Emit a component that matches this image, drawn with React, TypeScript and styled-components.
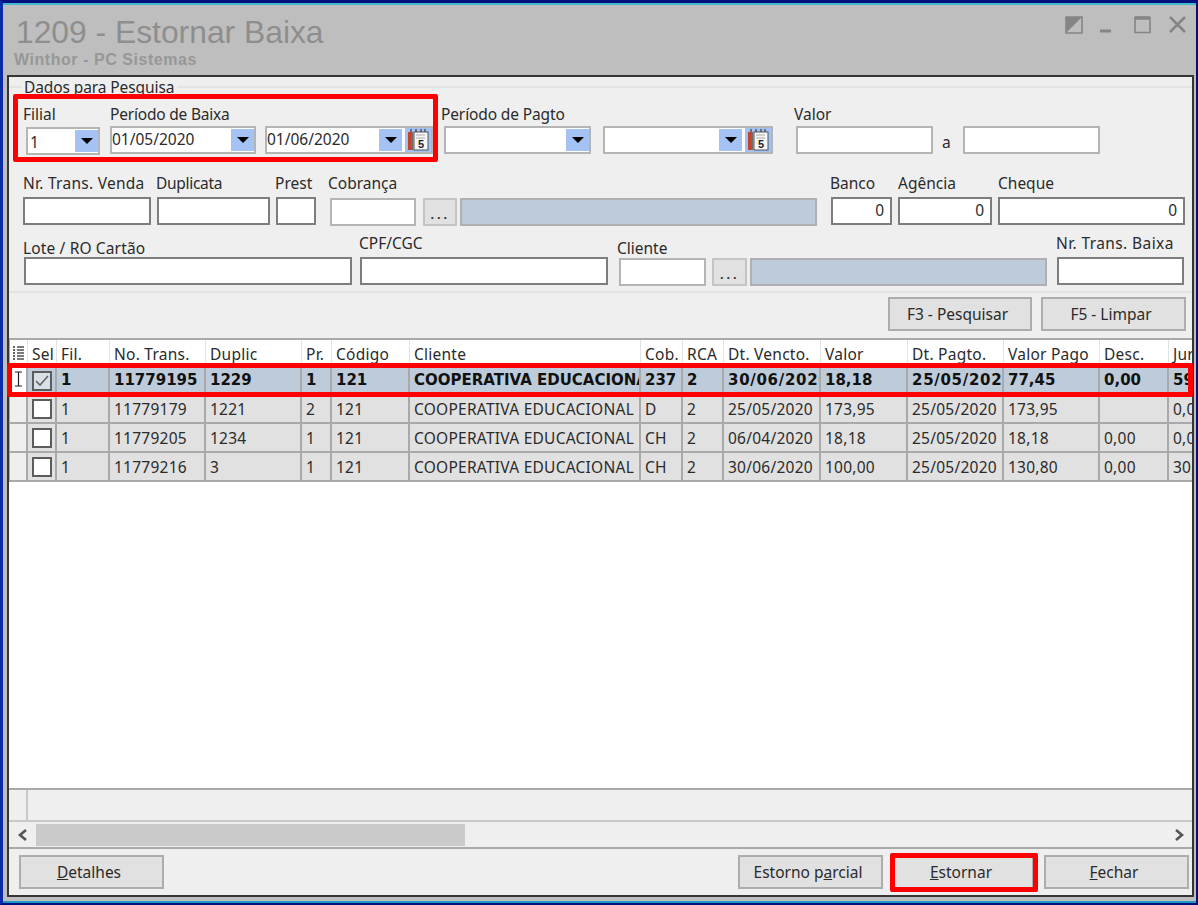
import React from "react";
import styled, { createGlobalStyle } from "styled-components";

const Global = createGlobalStyle`
  html, body { margin: 0; padding: 0; background: #bebebe; overflow: hidden; }
  * { box-sizing: border-box; }
`;

const UI_FONT = `"Noto Sans", "DejaVu Sans", sans-serif`;
const BOLD_FONT = `"DejaVu Sans", "Noto Sans", sans-serif`;

const Page = styled.div`
  position: relative;
  width: 1198px;
  height: 905px;
  font-family: ${UI_FONT};
  font-size: 15.5px;
  color: #2b2b2b;
  overflow: hidden;
`;
const Frame = styled.div`
  width: 100%;
  height: 100%;
  border-style: solid;
  border-color: #00107c #00107c #00107c #0a2ca6;
  border-width: 3px 2px 2px 3px;
`;
const Inner = styled.div`
  height: 100%;
  background: #bebebe;
  border-top: 2px solid #45b7cc;
  border-bottom: 2px solid #2296c8;
  display: flex;
  flex-direction: column;
`;
const TitleBar = styled.header`
  height: 70px;
  flex: none;
  display: flex;
  justify-content: space-between;
`;
const TitleText = styled.div`
  padding: 7px 0 0 13px;
`;
const Title = styled.h1`
  margin: 0;
  font: 400 31.8px/40px "Liberation Sans", Arial, sans-serif;
  color: #8e8e8e;
`;
const Subtitle = styled.div`
  font: 700 16px/16px "Liberation Sans", Arial, sans-serif;
  color: #979797;
  margin: 0 0 0 -2px;
  letter-spacing: 0.55px;
`;
const WindowIcons = styled.svg`
  width: 125px;
  height: 30px;
  margin: 11px 6px 0 0;
  flex: none;
`;
const Panel = styled.main`
  flex: 1;
  min-height: 0;
  margin: 0 2px 4px 4px;
  border: 2px solid #363636;
  background: #efefef;
  display: flex;
  flex-direction: column;
`;
const Group = styled.section`
  margin-top: 9px;
  border-top: 2px solid #e3e3e3;
  border-bottom: 2px solid #e3e3e3;
  padding-bottom: 6px;
  flex: none;
`;
const Legend = styled.div`
  width: fit-content;
  margin: -10px 0 0 12px;
  padding: 0 3px;
  height: 18px;
  line-height: 18px;
  background: #efefef;
  letter-spacing: -0.1px;
`;
const FormRow = styled.div<{ $mt: number }>`
  display: flex;
  align-items: flex-end;
  margin-top: ${(p) => p.$mt}px;
`;
const Field = styled.div<{ $w: number; $ml: number; $shift?: number }>`
  width: ${(p) => p.$w}px;
  margin-left: ${(p) => p.$ml}px;
  margin-bottom: ${(p) => -(p.$shift ?? 0)}px;
  flex: none;
`;
const Label = styled.label<{ $dx?: number; $gap?: number; $ls?: number }>`
  display: block;
  height: 18px;
  line-height: 18px;
  white-space: nowrap;
  margin-left: ${(p) => p.$dx ?? 0}px;
  margin-bottom: ${(p) => p.$gap ?? 3}px;
  letter-spacing: ${(p) => p.$ls ?? 0}px;
`;
const Box = styled.div<{ $dark?: boolean; $right?: boolean }>`
  height: 28px;
  background: #fff;
  border: 2px solid ${(p) => (p.$dark ? "#7d7d7d" : "#b5b5b5")};
  display: flex;
  align-items: center;
  justify-content: ${(p) => (p.$right ? "flex-end" : "flex-start")};
  padding: ${(p) => (p.$right ? "0 6px 0 0" : "0")};
  line-height: 1;
`;
const ComboValue = styled.span<{ $inset?: boolean }>`
  flex: 1;
  padding: ${(p) => (p.$inset ? "3px 0 0 2px" : "0")};
`;
const ArrowBtn = styled.span`
  width: 23px;
  height: 22px;
  background: #a4c2f4;
  flex: none;
  display: flex;
  align-items: center;
  justify-content: center;
  &::after {
    content: "";
    border-left: 6px solid transparent;
    border-right: 6px solid transparent;
    border-top: 6px solid #000;
  }
`;
const CalBtn = styled.span`
  width: 26px;
  height: 24px;
  margin-left: 3px;
  background: #a4c2f4;
  flex: none;
  display: flex;
  align-items: center;
  justify-content: center;
`;
const Filled = styled.div`
  height: 28px;
  background: #bdcbda;
  border: 2px solid #b0b0b0;
`;
const MoreBtn = styled.div`
  height: 28px;
  background: #e1e1e1;
  border: 2px solid #c4c4c4;
  text-align: center;
  font-size: 15px;
  font-weight: 500;
  letter-spacing: 2.5px;
  line-height: 26px;
`;
const ToWord = styled.span`
  margin: 0 0 3px 9px;
  width: 21px;
  flex: none;
  line-height: 18px;
`;
const ActionBar = styled.div<{ $between?: boolean; $h: number; $pt: number; $pr: number; $pl?: number }>`
  height: ${(p) => p.$h}px;
  flex: none;
  display: flex;
  justify-content: ${(p) => (p.$between ? "space-between" : "flex-end")};
  gap: 9px;
  padding: ${(p) => `${p.$pt}px ${p.$pr}px 0 ${p.$pl ?? 0}px`};
`;
const BtnGroup = styled.div`
  display: flex;
  gap: 10px;
`;
const Button = styled.button<{ $w: number }>`
  width: ${(p) => p.$w}px;
  height: 34px;
  background: #e1e1e1;
  border: 2px solid #adadad;
  font: inherit;
  color: inherit;
  padding: 0 5px 0 0;
`;
const Grid = styled.div`
  flex: 1;
  min-height: 0;
  background: #fff;
  border-top: 2px solid #a9a9a9;
  overflow: hidden;
`;
const COLS = "19px 29px 53px 96px 96px 30px 78px 231px 42px 41px 97px 87px 96px 96px 69px 40px";
const Row = styled.div<{ $variant: "head" | "sel" | "plain" }>`
  display: grid;
  grid-template-columns: ${COLS};
  height: ${(p) => (p.$variant === "head" ? 25 : p.$variant === "sel" ? 30 : 29)}px;
  line-height: ${(p) => (p.$variant === "head" ? 28 : p.$variant === "sel" ? 31 : 29)}px;
  background: ${(p) => (p.$variant === "head" ? "#fff" : p.$variant === "sel" ? "#bdcbda" : "#e1e1e1")};
  font-family: ${(p) => (p.$variant === "sel" ? BOLD_FONT : UI_FONT)};
  font-size: ${(p) => (p.$variant === "sel" ? "15px" : "15.5px")};
  font-weight: ${(p) => (p.$variant === "sel" ? 700 : 400)};
  letter-spacing: ${(p) => (p.$variant === "sel" ? "0" : "0.25px")};
  color: ${(p) => (p.$variant === "sel" ? "#111" : "#2b2b2b")};
`;
const Cell = styled.div<{ $head?: boolean; $wide?: boolean }>`
  overflow: hidden;
  white-space: nowrap;
  padding-left: 4px;
  letter-spacing: ${(p) => (p.$wide ? "0.7px" : "inherit")};
  border-right: ${(p) => (p.$head ? "1px solid #e2e2e2" : "2px solid #a9a9a9")};
  border-bottom: ${(p) => (p.$head ? "0" : "2px solid #a9a9a9")};
`;
const IndCell = styled.div<{ $active?: boolean; $head?: boolean }>`
  background: ${(p) => (p.$head || p.$active ? "#fff" : "#efefef")};
  border-left: 1px solid #a9a9a9;
  border-right: ${(p) => (p.$head ? "1px solid #e2e2e2" : "2px solid #a9a9a9")};
  border-bottom: ${(p) => (p.$head ? "0" : "2px solid #a9a9a9")};
  display: flex;
  align-items: center;
  justify-content: center;
`;
const CheckCell = styled.div`
  border-right: 2px solid #a9a9a9;
  border-bottom: 2px solid #a9a9a9;
  display: flex;
  align-items: center;
  justify-content: center;
`;
const Check = styled.span<{ $on?: boolean }>`
  width: 20px;
  height: 20px;
  margin-top: ${(p) => (p.$on ? 3 : 0)}px;
  border: 2px solid #5c5c5c;
  background: ${(p) => (p.$on ? "#d7dfe7" : "#fff")};
  display: flex;
  align-items: center;
  justify-content: center;
`;
const Summary = styled.div`
  height: 34px;
  flex: none;
  border-top: 2px solid #a9a9a9;
  border-bottom: 2px solid #c8c8c8;
  padding-left: 17px;
`;
const SummaryCell = styled.div`
  width: 2px;
  height: 100%;
  background: #c8c8c8;
`;
const ScrollBar = styled.div`
  height: 27px;
  flex: none;
  border-bottom: 2px solid #a9a9a9;
  display: flex;
  align-items: center;
  justify-content: space-between;
`;
const ScrollArrow = styled.svg`
  width: 27px;
  height: 16px;
  flex: none;
`;
const ScrollTrack = styled.div`
  flex: 1;
  height: 22px;
`;
const Thumb = styled.div`
  width: 429px;
  height: 100%;
  background: #cacaca;
`;
const Highlight = styled.div<{ $x: number; $y: number; $w: number; $h: number; $t: number }>`
  position: absolute;
  left: ${(p) => p.$x}px;
  top: ${(p) => p.$y}px;
  width: ${(p) => p.$w}px;
  height: ${(p) => p.$h}px;
  border: ${(p) => p.$t}px solid #f00;
  border-radius: 2px;
  pointer-events: none;
`;

const CalendarIcon = () => (
  <svg width="24" height="24" viewBox="0 0 24 24">
    <rect x="2" y="4" width="5" height="18" fill="#c0452c" />
    <rect x="5" y="4" width="2" height="18" fill="#6d6d6d" />
    <rect x="8" y="4" width="14" height="18" fill="#f7f7f7" stroke="#555" strokeWidth="1" />
    <path d="M5 4V1M10 4V1M15 4V1M19 4V1" stroke="#444" strokeWidth="1.3" />
    <path d="M10 7h9M10 10h9" stroke="#aaa" strokeWidth="1" />
    <text x="15" y="20" fontSize="11" fontWeight="700" fontFamily="Liberation Sans" textAnchor="middle" fill="#222">5</text>
  </svg>
);

const ListIcon = () => (
  <svg width="11" height="14" viewBox="0 0 11 14">
    {[1, 4, 7, 10, 13].map((y) => (
      <g key={y} stroke="#333" strokeWidth="1.3">
        <path d={`M0 ${y}h2`} />
        <path d={`M4 ${y}h7`} />
      </g>
    ))}
  </svg>
);

const IBeam = () => (
  <svg width="9" height="16" viewBox="0 0 9 16" fill="none" stroke="#222" strokeWidth="1.2">
    <path d="M1 1h7M1 15h7M4.5 1v14" />
  </svg>
);

const Combo = ({ value, cal, inset }: { value?: string; cal?: boolean; inset?: boolean }) => (
  <Box>
    <ComboValue $inset={inset}>{value}</ComboValue>
    <ArrowBtn />
    {cal && (
      <CalBtn>
        <CalendarIcon />
      </CalBtn>
    )}
  </Box>
);

const HEAD = ["Sel", "Fil.", "No. Trans.", "Duplic", "Pr.", "Código", "Cliente", "Cob.", "RCA", "Dt. Vencto.", "Valor", "Dt. Pagto.", "Valor Pago", "Desc.", "Juros"];
const ROWS = [
  ["1", "11779195", "1229", "1", "121", "COOPERATIVA EDUCACIONAL", "237", "2", "30/06/2020", "18,18", "25/05/2020", "77,45", "0,00", "59,27"],
  ["1", "11779179", "1221", "2", "121", "COOPERATIVA EDUCACIONAL", "D", "2", "25/05/2020", "173,95", "25/05/2020", "173,95", "", "0,00"],
  ["1", "11779205", "1234", "1", "121", "COOPERATIVA EDUCACIONAL", "CH", "2", "06/04/2020", "18,18", "25/05/2020", "18,18", "0,00", "0,00"],
  ["1", "11779216", "3", "1", "121", "COOPERATIVA EDUCACIONAL", "CH", "2", "30/06/2020", "100,00", "25/05/2020", "130,80", "0,00", "30,80"],
];

export default function App() {
  return (
    <Page>
      <Global />
      <Frame>
        <Inner>
          <TitleBar>
            <TitleText>
              <Title>1209 - Estornar Baixa</Title>
              <Subtitle>Winthor - PC Sistemas</Subtitle>
            </TitleText>
            <WindowIcons viewBox="0 0 125 30">
              <path d="M1 1h16v16H1z" fill="none" stroke="#858585" strokeWidth="1.6" />
              <path d="M1 1h16L1 17z" fill="#858585" />
              <path d="M35 15h11" stroke="#858585" strokeWidth="3" />
              <path d="M70 1.5h15v15H70z" fill="none" stroke="#858585" strokeWidth="1.6" />
              <path d="M70 2h15" stroke="#858585" strokeWidth="3.5" />
              <path d="M105 1l15 15M120 1l-15 15" stroke="#858585" strokeWidth="2.6" />
            </WindowIcons>
          </TitleBar>
          <Panel>
            <Group>
              <Legend>Dados para Pesquisa</Legend>
              <FormRow $mt={9}>
                <Field $w={74} $ml={17} $shift={1}>
                  <Label $dx={-3} $gap={4}>Filial</Label>
                  <Combo value="1" inset />
                </Field>
                <Field $w={146} $ml={10}>
                  <Label $ls={-0.2}>Período de Baixa</Label>
                  <Combo value="01/05/2020" />
                </Field>
                <Field $w={168} $ml={9}>
                  <Combo value="01/06/2020" cal />
                </Field>
                <Field $w={147} $ml={11}>
                  <Label $dx={-3} $ls={-0.13}>Período de Pagto</Label>
                  <Combo />
                </Field>
                <Field $w={170} $ml={12}>
                  <Combo cal />
                </Field>
                <Field $w={137} $ml={23}>
                  <Label $dx={-2}>Valor</Label>
                  <Box />
                </Field>
                <ToWord>a</ToWord>
                <Field $w={137} $ml={0}>
                  <Box />
                </Field>
              </FormRow>
              <FormRow $mt={20}>
                <Field $w={128} $ml={14}>
                  <Label $gap={5} $ls={0.27}>Nr. Trans. Venda</Label>
                  <Box $dark />
                </Field>
                <Field $w={113} $ml={6}>
                  <Label $dx={-1} $gap={5} $ls={-0.3}>Duplicata</Label>
                  <Box $dark />
                </Field>
                <Field $w={40} $ml={6}>
                  <Label $dx={-1} $gap={5}>Prest</Label>
                  <Box $dark />
                </Field>
                <Field $w={86} $ml={14} $shift={1}>
                  <Label $dx={-2} $gap={6}>Cobrança</Label>
                  <Box />
                </Field>
                <Field $w={34} $ml={7} $shift={1}>
                  <MoreBtn>...</MoreBtn>
                </Field>
                <Field $w={357} $ml={3} $shift={1}>
                  <Filled />
                </Field>
                <Field $w={61} $ml={14}>
                  <Label $dx={-1} $gap={5}>Banco</Label>
                  <Box $dark $right>0</Box>
                </Field>
                <Field $w={94} $ml={6}>
                  <Label $gap={5}>Agência</Label>
                  <Box $dark $right>0</Box>
                </Field>
                <Field $w={187} $ml={6}>
                  <Label $gap={5}>Cheque</Label>
                  <Box $dark $right>0</Box>
                </Field>
              </FormRow>
              <FormRow $mt={9}>
                <Field $w={328} $ml={15}>
                  <Label $dx={-1} $gap={0} $ls={0.14}>Lote / RO Cartão</Label>
                  <Box $dark />
                </Field>
                <Field $w={248} $ml={8}>
                  <Label $dx={-1} $gap={5}>CPF/CGC</Label>
                  <Box $dark />
                </Field>
                <Field $w={87} $ml={11} $shift={1}>
                  <Label $dx={-2} $gap={1}>Cliente</Label>
                  <Box />
                </Field>
                <Field $w={35} $ml={6} $shift={1}>
                  <MoreBtn>...</MoreBtn>
                </Field>
                <Field $w={297} $ml={3} $shift={1}>
                  <Filled />
                </Field>
                <Field $w={127} $ml={10}>
                  <Label $dx={-1} $gap={5} $ls={0.4}>Nr. Trans. Baixa</Label>
                  <Box $dark />
                </Field>
              </FormRow>
            </Group>
            <ActionBar $h={45} $pt={4} $pr={6}>
              <Button $w={144}>F3 - Pesquisar</Button>
              <Button $w={145}>F5 - Limpar</Button>
            </ActionBar>
            <Grid>
              <Row $variant="head">
                <IndCell $head>
                  <ListIcon />
                </IndCell>
                {HEAD.map((h) => (
                  <Cell key={h} $head>
                    {h}
                  </Cell>
                ))}
              </Row>
              {ROWS.map((r, i) => (
                <Row key={r[1]} $variant={i === 0 ? "sel" : "plain"}>
                  <IndCell $active={i === 0}>{i === 0 && <IBeam />}</IndCell>
                  <CheckCell>
                    <Check $on={i === 0}>
                      {i === 0 && (
                        <svg width="16" height="16" viewBox="0 0 16 16" fill="none" stroke="#666" strokeWidth="1.6">
                          <path d="M2 8l4 4 8-9" />
                        </svg>
                      )}
                    </Check>
                  </CheckCell>
                  {r.map((c, j) => (
                    <Cell key={j} $wide={i === 0 && c.includes("/")}>
                      {c}
                    </Cell>
                  ))}
                </Row>
              ))}
            </Grid>
            <Summary>
              <SummaryCell />
            </Summary>
            <ScrollBar>
              <ScrollArrow viewBox="0 0 27 16">
                <path d="M17 3l-6 5 6 5" fill="none" stroke="#555" strokeWidth="2.6" />
              </ScrollArrow>
              <ScrollTrack>
                <Thumb />
              </ScrollTrack>
              <ScrollArrow viewBox="0 0 27 16">
                <path d="M11 3l6 5-6 5" fill="none" stroke="#555" strokeWidth="2.6" />
              </ScrollArrow>
            </ScrollBar>
            <ActionBar $between $h={46} $pt={6} $pr={3} $pl={10}>
              <Button $w={145}>
                <u>D</u>etalhes
              </Button>
              <BtnGroup>
                <Button $w={145}>
                  Estorno p<u>a</u>rcial
                </Button>
                <Button $w={141}>
                  <u>E</u>stornar
                </Button>
                <Button $w={145}>
                  <u>F</u>echar
                </Button>
              </BtnGroup>
            </ActionBar>
          </Panel>
        </Inner>
      </Frame>
      <Highlight $x={13} $y={94} $w={425} $h={68} $t={5} />
      <Highlight $x={7} $y={363} $w={1186} $h={34} $t={5} />
      <Highlight $x={890} $y={853} $w={148} $h={39} $t={5} />
    </Page>
  );
}
